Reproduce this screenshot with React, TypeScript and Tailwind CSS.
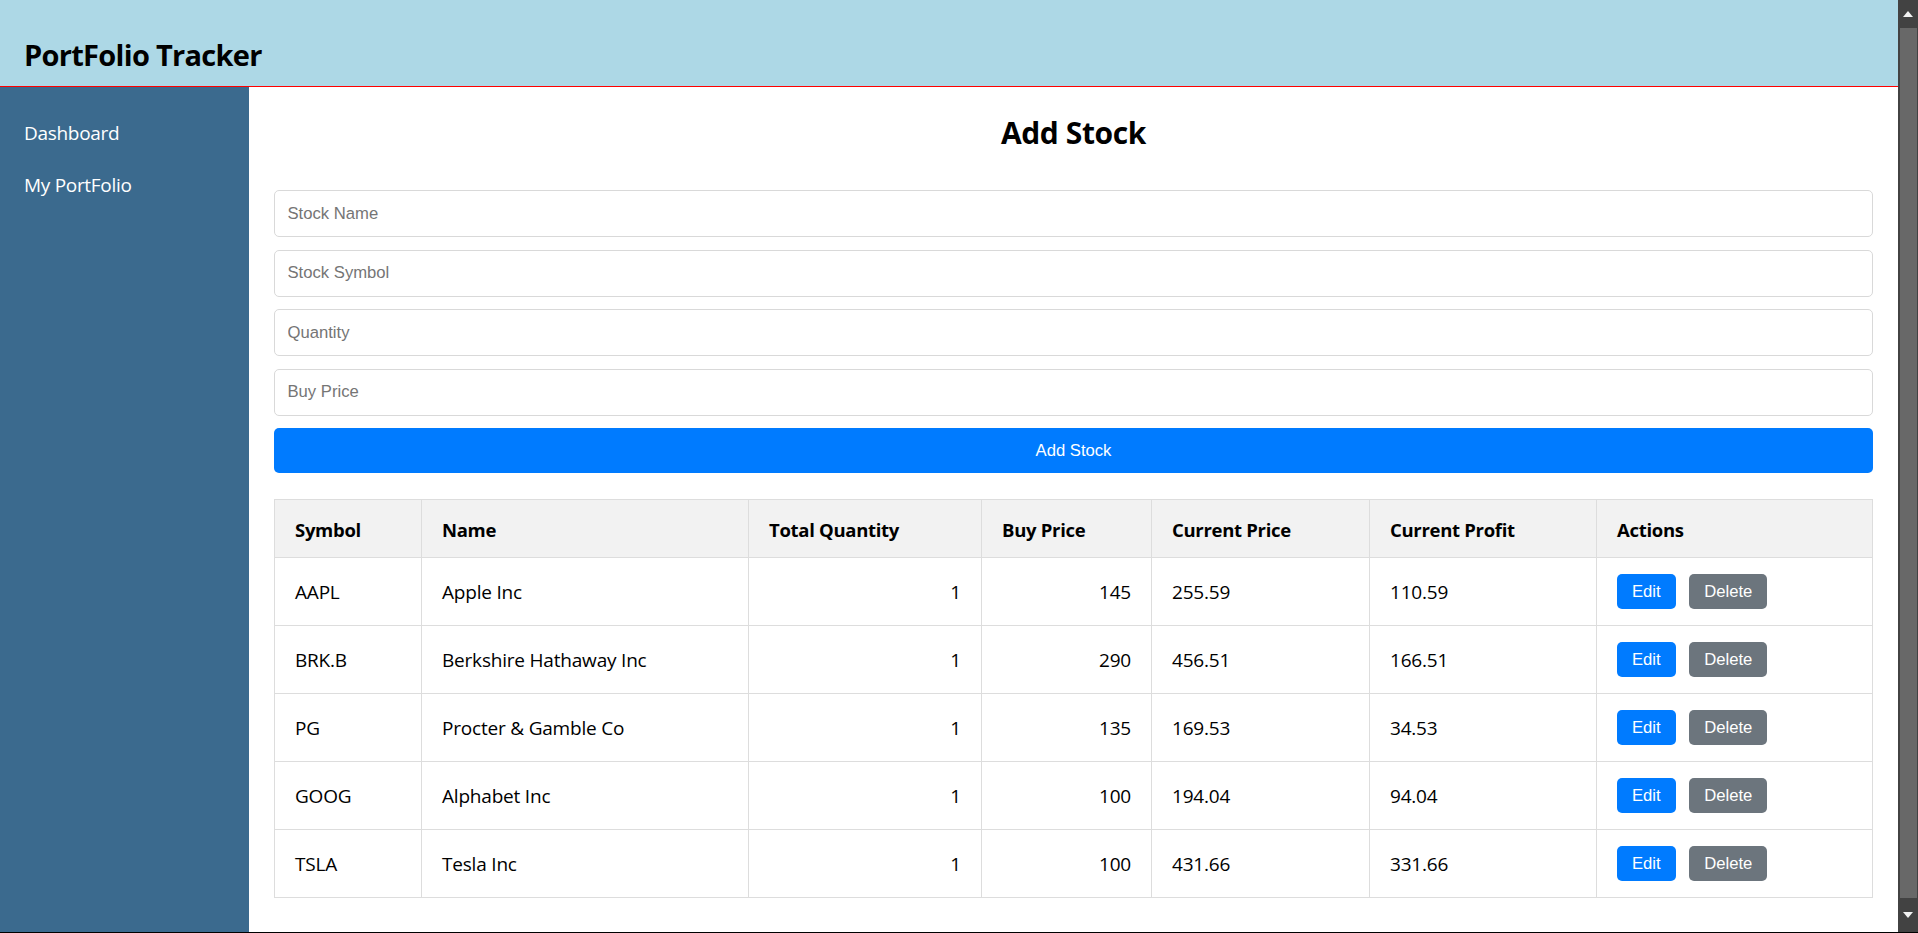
import React from "react";

const stocks = [
  { symbol: "AAPL", name: "Apple Inc", qty: 1, buy: 145, current: "255.59", profit: "110.59" },
  { symbol: "BRK.B", name: "Berkshire Hathaway Inc", qty: 1, buy: 290, current: "456.51", profit: "166.51" },
  { symbol: "PG", name: "Procter & Gamble Co", qty: 1, buy: 135, current: "169.53", profit: "34.53" },
  { symbol: "GOOG", name: "Alphabet Inc", qty: 1, buy: 100, current: "194.04", profit: "94.04" },
  { symbol: "TSLA", name: "Tesla Inc", qty: 1, buy: 100, current: "431.66", profit: "331.66" },
];

const fields = ["Stock Name", "Stock Symbol", "Quantity", "Buy Price"];

function Scrollbar() {
  return (
    <div className="w-[20px] shrink-0 bg-[#424242] flex flex-col">
      <div className="h-[28px] flex items-center justify-center">
        <svg width="10" height="6" viewBox="0 0 10 6">
          <path d="M0 6 L5 0 L10 6 Z" fill="#f2f2f2" />
        </svg>
      </div>
      <div className="flex-1 ml-[2px] mr-[1px] bg-[#686868]" />
      <div className="h-[34px] flex items-center justify-center">
        <svg width="10" height="6" viewBox="0 0 10 6">
          <path d="M0 0 L10 0 L5 6 Z" fill="#f2f2f2" />
        </svg>
      </div>
    </div>
  );
}

export default function App() {
  const cell = "border border-[#dddddd] px-[20px] pt-[2px]";
  return (
    <div className="h-screen flex flex-col overflow-hidden bg-white font-['Open_Sans',sans-serif] text-black">
      <div className="flex flex-1 min-h-0">
        <div className="flex-1 min-w-0 flex flex-col">
          <header className="h-[87px] shrink-0 bg-[#add8e6] border-b border-[#ff0000] pl-[24px] pt-[40px]">
            <h1 className="text-[29px] leading-[30px] font-bold tracking-[-0.7px]">PortFolio Tracker</h1>
          </header>
          <div className="flex flex-1 min-h-0">
            <nav className="w-[249px] shrink-0 bg-[#3b6a8e] text-white text-[19px] leading-[20px] tracking-[-0.3px] pl-[24px] pt-[36px] flex flex-col gap-[31.5px]">
              <div>Dashboard</div>
              <div>My PortFolio</div>
            </nav>
            <main className="flex-1 min-w-0 px-[25px] pt-[31px]">
              <h2 className="text-center text-[30px] leading-[30px] font-bold tracking-[-0.4px]">Add Stock</h2>
              <form className="mt-[42px] flex flex-col gap-[12.5px] font-['Liberation_Sans',Arial,sans-serif]">
                {fields.map((f) => (
                  <input
                    key={f}
                    placeholder={f}
                    className="h-[47px] w-full border border-[#d9d9d9] rounded-[5px] px-[12.5px] text-[16.67px] placeholder:text-[#757575] outline-none"
                  />
                ))}
                <button
                  type="button"
                  className="h-[45px] w-full bg-[#007bff] text-white rounded-[5px] text-[16.67px]"
                >
                  Add Stock
                </button>
              </form>
              <table className="mt-[26px] w-full table-fixed border-collapse text-[19px] tracking-[-0.2px]">
                <colgroup>
                  <col className="w-[147px]" />
                  <col className="w-[327px]" />
                  <col className="w-[233px]" />
                  <col className="w-[170px]" />
                  <col className="w-[218px]" />
                  <col className="w-[227px]" />
                  <col />
                </colgroup>
                <thead>
                  <tr className="h-[58px] bg-[#f2f2f2]">
                    {["Symbol", "Name", "Total Quantity", "Buy Price", "Current Price", "Current Profit", "Actions"].map((h) => (
                      <th key={h} className={`${cell} text-left font-bold text-[18.5px] tracking-[-0.3px]`}>
                        {h}
                      </th>
                    ))}
                  </tr>
                </thead>
                <tbody>
                  {stocks.map((s) => (
                    <tr key={s.symbol} className="h-[68px]">
                      <td className={cell}>{s.symbol}</td>
                      <td className={cell}>{s.name}</td>
                      <td className={`${cell} text-right`}>{s.qty}</td>
                      <td className={`${cell} text-right`}>{s.buy}</td>
                      <td className={cell}>{s.current}</td>
                      <td className={cell}>{s.profit}</td>
                      <td className="border border-[#dddddd] px-[20px]">
                        <div className="flex gap-[13.5px] font-['Liberation_Sans',Arial,sans-serif] text-[16.67px] tracking-normal text-white">
                          <button className="h-[35.5px] px-[15px] rounded-[5px] bg-[#007bff]">Edit</button>
                          <button className="h-[35.5px] px-[15px] rounded-[5px] bg-[#6c757d]">Delete</button>
                        </div>
                      </td>
                    </tr>
                  ))}
                </tbody>
              </table>
            </main>
          </div>
        </div>
        <Scrollbar />
      </div>
      <div className="h-[1px] shrink-0 bg-black" />
    </div>
  );
}
